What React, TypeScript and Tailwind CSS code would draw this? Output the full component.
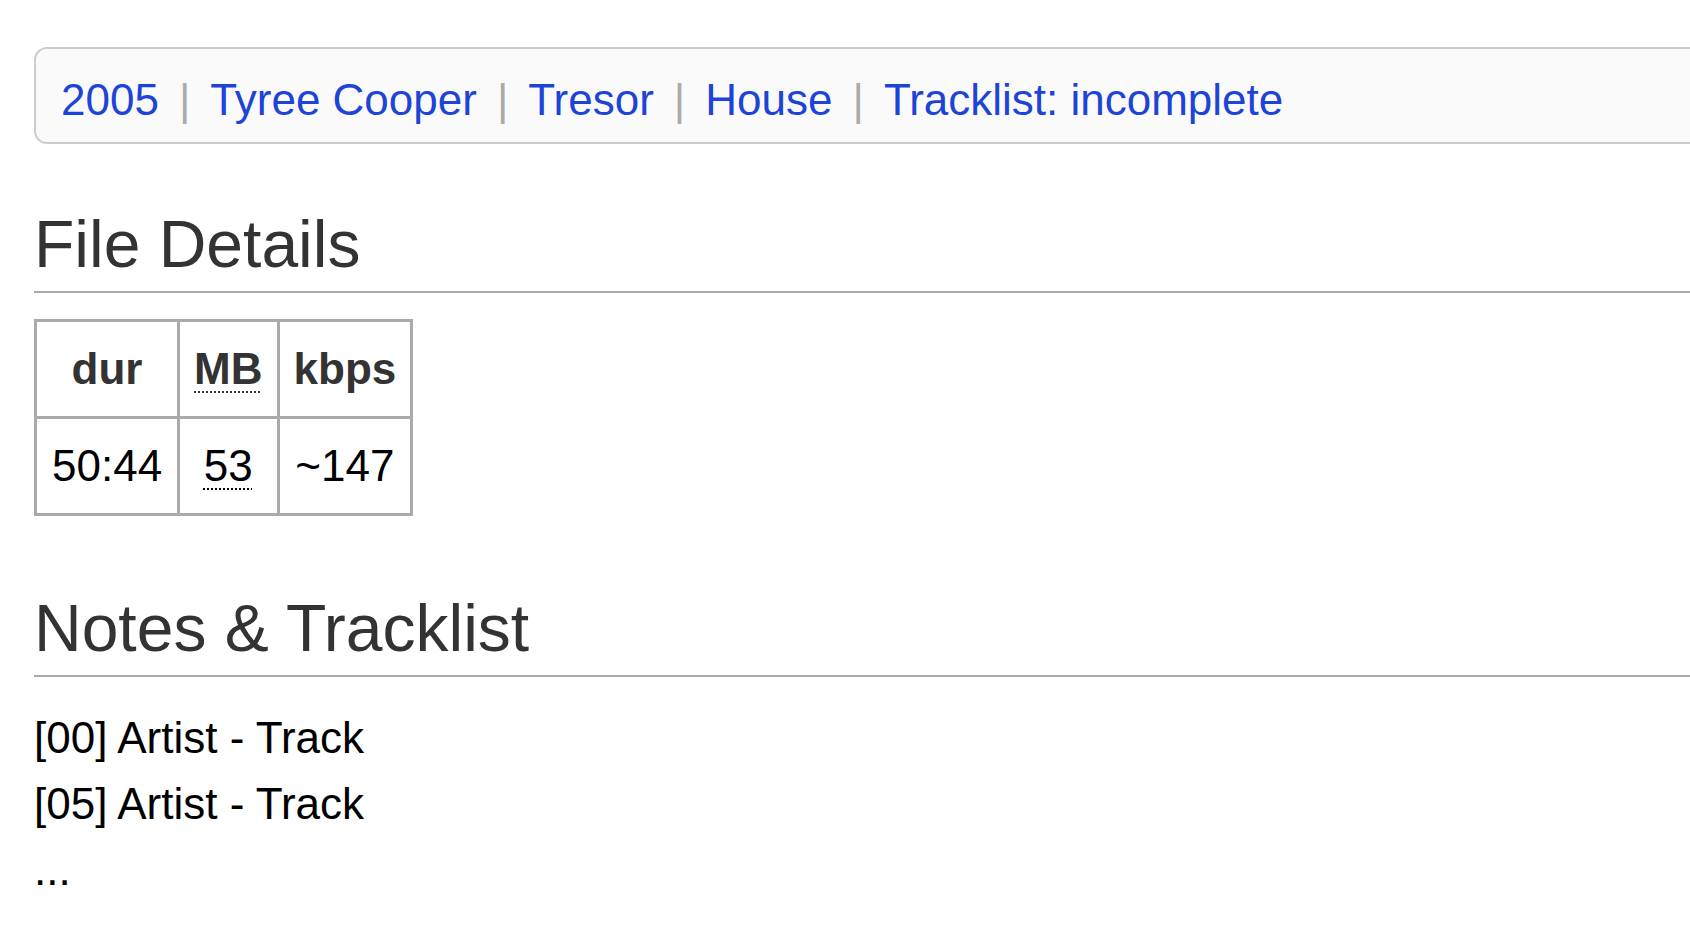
const links = ["2005", "Tyree Cooper", "Tresor", "House", "Tracklist: incomplete"];

const tracks = ["[00] Artist - Track", "[05] Artist - Track", "..."];

export default function App() {
  return (
    <div className="min-h-screen overflow-hidden bg-white font-['Liberation_Sans',Arial,sans-serif] text-[44px] leading-[66px] text-black">
      <div className="pl-[34px] pt-[47px]">
        {/* breadcrumb box */}
        <div className="-mr-[40px] rounded-[13px] border-2 border-[#cccccc] bg-[#fafafa] pb-[9px] pl-[25px] pt-[18px] whitespace-nowrap">
          {links.map((l, i) => (
            <span key={l}>
              {i > 0 && <span className="mx-[20px] text-[#aaaaaa]">|</span>}
              <a href="#" className="text-[#1d44d7]">
                {l}
              </a>
            </span>
          ))}
        </div>

        <h2 className="mt-[61px] border-b-2 border-[#aaaaaa] pb-[7px] text-[66px] leading-[1.2] font-normal text-[#333333]">
          File Details
        </h2>

        <table className="mt-[26px] border-collapse border-[3px] border-[#aaaaaa] text-center">
          <thead>
            <tr>
              <th className="border-[3px] border-[#aaaaaa] px-[15px] py-[14px] font-bold text-[#333333]">dur</th>
              <th className="border-[3px] border-[#aaaaaa] px-[14px] py-[14px] font-bold text-[#333333]">
                <abbr title="megabytes" className="underline decoration-dotted decoration-2 underline-offset-[7px]">
                  MB
                </abbr>
              </th>
              <th className="border-[3px] border-[#aaaaaa] px-[14px] py-[14px] font-bold text-[#333333]">kbps</th>
            </tr>
          </thead>
          <tbody>
            <tr>
              <td className="border-[3px] border-[#aaaaaa] px-[15px] py-[14px]">50:44</td>
              <td className="border-[3px] border-[#aaaaaa] px-[14px] py-[14px]">
                <abbr title="53 MB" className="underline decoration-dotted decoration-2 underline-offset-[7px]">
                  53
                </abbr>
              </td>
              <td className="border-[3px] border-[#aaaaaa] px-[14px] py-[14px]">~147</td>
            </tr>
          </tbody>
        </table>

        <h2 className="mt-[73px] border-b-2 border-[#aaaaaa] pb-[7px] text-[66px] leading-[1.2] font-normal text-[#333333]">
          Notes &amp; Tracklist
        </h2>

        <div className="mt-[28px]">
          {tracks.map((t) => (
            <div key={t}>{t}</div>
          ))}
        </div>
      </div>
    </div>
  );
}
